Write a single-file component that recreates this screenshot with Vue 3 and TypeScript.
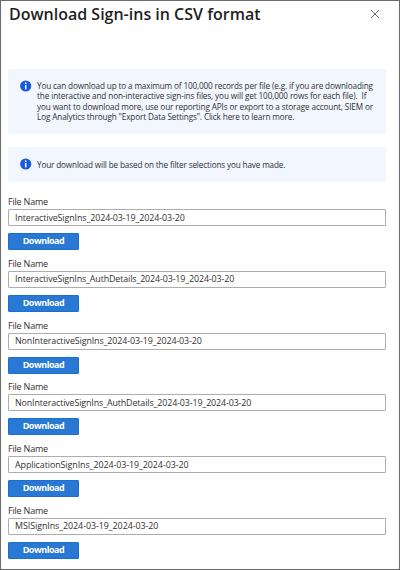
<script setup lang="ts">
import { ref } from 'vue'

interface Notice {
  lines: { text: string; fit: string }[]
  size: string
}

interface DownloadFile {
  name: string
  fit: string
}

const notices: Notice[] = [
  {
    size: 'tall',
    lines: [
      { text: 'You can download up to a maximum of 100,000 records per file (e.g. if you are downloading', fit: 'a' },
      { text: 'the interactive and non-interactive sign-ins files, you will get 100,000 rows for each file).  If', fit: 'b' },
      { text: 'you want to download more, use our reporting APIs or export to a storage account, SIEM or', fit: 'c' },
      { text: 'Log Analytics through "Export Data Settings". Click here to learn more.', fit: 'd' },
    ],
  },
  {
    size: 'short',
    lines: [{ text: 'Your download will be based on the filter selections you have made.', fit: 'e' }],
  },
]

const files = ref<DownloadFile[]>([
  { name: 'InteractiveSignIns_2024-03-19_2024-03-20', fit: 'f1' },
  { name: 'InteractiveSignIns_AuthDetails_2024-03-19_2024-03-20', fit: 'f2' },
  { name: 'NonInteractiveSignIns_2024-03-19_2024-03-20', fit: 'f3' },
  { name: 'NonInteractiveSignIns_AuthDetails_2024-03-19_2024-03-20', fit: 'f4' },
  { name: 'ApplicationSignIns_2024-03-19_2024-03-20', fit: 'f5' },
  { name: 'MSISignIns_2024-03-19_2024-03-20', fit: 'f6' },
])
</script>

<template>
  <main class="panel">
    <header class="header">
      <h1 class="title">Download Sign-ins in CSV format</h1>
      <button class="close" type="button" aria-label="Close">
        <svg width="10" height="10" viewBox="0 0 10 10">
          <path d="M1 1 9 9M9 1 1 9" fill="none" stroke="#5c5c5c" stroke-width="0.9" />
        </svg>
      </button>
    </header>

    <section v-for="notice in notices" :key="notice.size" class="notice" :class="notice.size">
      <svg class="info" width="12" height="12" viewBox="0 0 12 12">
        <circle cx="5.7" cy="6" r="5.6" fill="#1b5bdb" />
        <circle cx="5.7" cy="3.1" r="0.9" fill="#fff" />
        <path d="M4.95 4.9h1.5v4.5h-1.5z" fill="#fff" />
      </svg>
      <p class="copy">
        <span v-for="line in notice.lines" :key="line.fit" class="line" :class="line.fit">{{ line.text }}</span>
      </p>
    </section>

    <form class="files" @submit.prevent>
      <div v-for="file in files" :key="file.fit" class="file">
        <label class="label" :for="file.fit">File Name</label>
        <input :id="file.fit" v-model="file.name" class="input" :class="file.fit" type="text" spellcheck="false" />
        <button class="download" type="button">Download</button>
      </div>
    </form>
  </main>
</template>

<style>
body {
  background: #fff;
}
</style>

<style scoped>
.panel {
  box-sizing: border-box;
  width: 400px;
  height: 570px;
  padding: 0 13px 0 7px;
  border: 1px solid #6b6b6b;
  background: #fff;
  color: #323130;
  font-family: 'Open Sans', 'Noto Sans', sans-serif;
  overflow: hidden;
}

.header {
  display: flex;
  justify-content: space-between;
  height: 68px;
}

.title {
  margin: 1px 0 0 1px;
  font-size: 16px;
  font-weight: 600;
  line-height: 24px;
  color: #1f1f1f;
  white-space: nowrap;
}

.close {
  width: 10px;
  height: 10px;
  margin: 8px 6px 0 0;
  padding: 0;
  border: 0;
  background: none;
}

.close svg {
  display: block;
}

.notice {
  display: flex;
  box-sizing: border-box;
  padding: 11px 0 0 12px;
  margin-bottom: 13px;
  border-radius: 1px;
  background: #f1f6ff;
}

.tall {
  height: 65px;
}

.short {
  height: 35px;
}

.info {
  flex: none;
  margin-right: 5px;
}

.copy {
  margin: 1px 0 0;
  font-size: 8.2px;
  line-height: 10.4px;
}

.short .copy {
  margin-top: 2px;
}

.line {
  display: block;
  white-space: pre;
}

.a { letter-spacing: -0.146px; }
.b { letter-spacing: -0.118px; }
.c { letter-spacing: -0.132px; }
.d { letter-spacing: -0.13px; }
.e { letter-spacing: -0.155px; }

.files {
  padding-top: 1px;
}

.file {
  display: flex;
  flex-direction: column;
  align-items: flex-start;
  height: 61.75px;
}

.label {
  height: 13px;
  font-size: 9px;
  line-height: 12px;
  letter-spacing: -0.2px;
}

.input {
  box-sizing: border-box;
  width: 378px;
  height: 17px;
  padding: 0 6px 1px;
  border: 1px solid #adadad;
  border-radius: 1px;
  background: #fff;
  color: #323130;
  font-family: inherit;
  font-size: 8.9px;
  line-height: 14px;
}

.f1 { letter-spacing: -0.1px; }
.f2 { letter-spacing: -0.12px; }
.f3 { letter-spacing: -0.1px; }
.f4 { letter-spacing: -0.12px; }
.f5 { letter-spacing: -0.07px; }
.f6 { letter-spacing: -0.06px; }

.download {
  width: 71px;
  height: 17px;
  margin-top: 7px;
  padding: 0 0 1px;
  border: 1px solid #1a6fd0;
  border-radius: 1px;
  background: #2878d4;
  color: #fff;
  font-family: inherit;
  font-size: 9px;
  font-weight: 700;
  line-height: 14px;
  letter-spacing: -0.45px;
}
</style>
